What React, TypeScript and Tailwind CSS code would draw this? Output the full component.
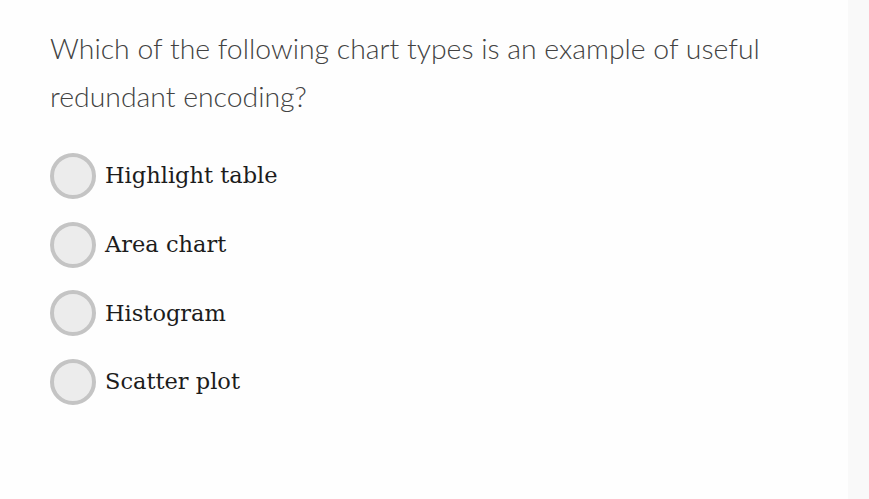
import React from "react";

const options = ["Highlight table", "Area chart", "Histogram", "Scatter plot"];

export default function App() {
  return (
    <div className="flex h-[499px] w-[869px] bg-[#fefefe]">
      <main className="flex-1 pl-[50px] pt-[24px]">
        <h1
          className="text-[28.4px] leading-[48px] font-light text-[#424242]"
          style={{ fontFamily: "Lato, 'Open Sans', sans-serif" }}
        >
          Which of the following chart types is an example of useful
          <br />
          redundant encoding?
        </h1>
        <div className="mt-[33px] flex flex-col gap-[22.7px]">
          {options.map((label) => (
            <label key={label} className="flex items-center gap-[9px]">
              <span className="h-[46px] w-[46px] shrink-0 rounded-full border-[4px] border-[#c4c4c4] bg-[#ececec]" />
              <span
                className="text-[22.5px] text-[#1c1c1c]"
                style={{ fontFamily: "'DejaVu Serif', serif" }}
              >
                {label}
              </span>
            </label>
          ))}
        </div>
      </main>
      <aside className="w-[21px] bg-[#f9f9f9]" />
    </div>
  );
}
